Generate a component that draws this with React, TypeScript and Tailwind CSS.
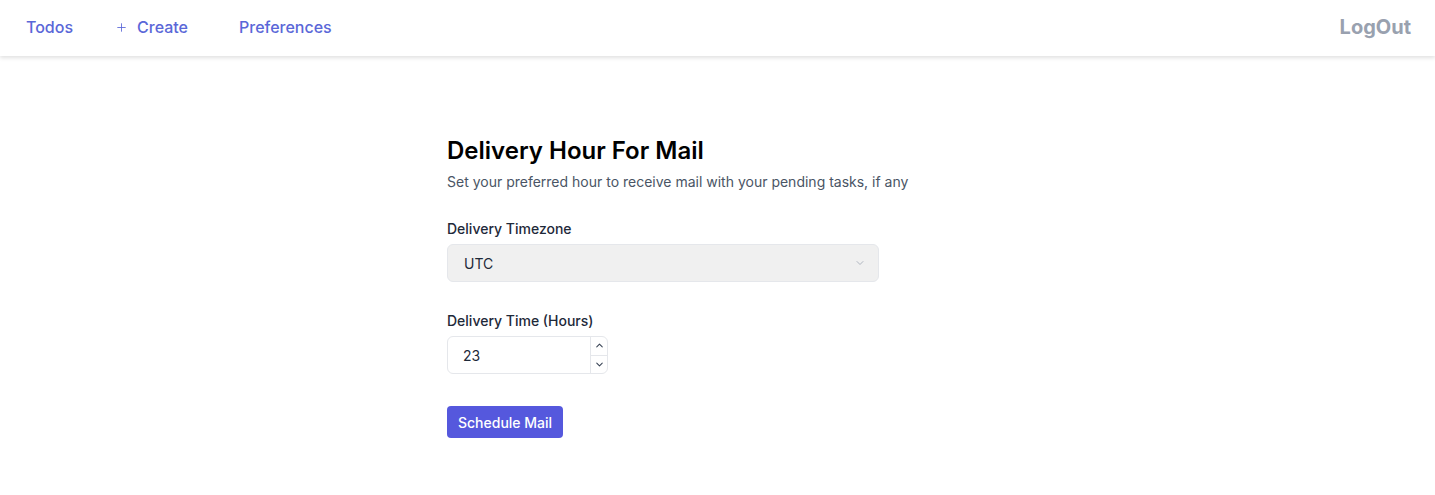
import { ChevronDown, ChevronUp, Plus } from "lucide-react";

const App = () => {
  return (
    <div className="min-h-screen bg-white font-['Inter',sans-serif] text-gray-900">

      {/* Nav */}
      <nav className="h-14 flex items-center justify-between px-[26px] bg-white shadow-[0_2px_4px_rgba(0,0,0,0.12)]">
        <div className="flex items-center text-[16px] font-medium text-[#5a67d8] -mt-[2px]">
          <a className="mr-[42px]">Todos</a>
          <a className="flex items-center mr-[51px]">
            <Plus size={13} strokeWidth={1.6} className="mr-[9px]" />
            Create
          </a>
          <a>Preferences</a>
        </div>
        <a className="text-[20px] font-bold text-gray-400 mr-[-2px] -mt-[2px]">LogOut</a>
      </nav>

      {/* Content */}
      <div className="mx-auto w-[541px] pt-[79px]">
        <h1 className="text-[24px] leading-8 font-semibold text-black">Delivery Hour For Mail</h1>
        <p className="mt-[4px] text-[14px] text-gray-600">
          Set your preferred hour to receive mail with your pending tasks, if any
        </p>

        <label className="block mt-[26px] text-[14px] font-medium text-gray-800">Delivery Timezone</label>
        <div className="mt-[5px] w-[432px] h-[38px] flex items-center justify-between pl-4 pr-3 bg-[#f0f0f0] border border-gray-200 rounded-md text-[14px] text-gray-800">
          <span>UTC</span>
          <ChevronDown size={12} strokeWidth={1.5} className="text-gray-400" />
        </div>

        <label className="block mt-[28px] text-[14px] font-medium text-gray-800">Delivery Time (Hours)</label>
        <div className="mt-[5px] w-[161px] h-[38px] flex border border-gray-200 rounded-md text-[14px] text-gray-800">
          <div className="flex-1 flex items-center pl-[15px]">23</div>
          <div className="w-[17px] flex flex-col border-l border-gray-200">
            <div className="flex-1 flex items-center justify-center border-b border-gray-200">
              <ChevronUp size={11} strokeWidth={2.2} className="text-gray-700" />
            </div>
            <div className="flex-1 flex items-center justify-center">
              <ChevronDown size={11} strokeWidth={2.2} className="text-gray-700" />
            </div>
          </div>
        </div>

        <button className="mt-[32px] h-8 px-[11px] rounded bg-[#5558dd] text-white text-[14px] font-medium">
          Schedule Mail
        </button>
      </div>
    </div>
  );
};

export default App;
